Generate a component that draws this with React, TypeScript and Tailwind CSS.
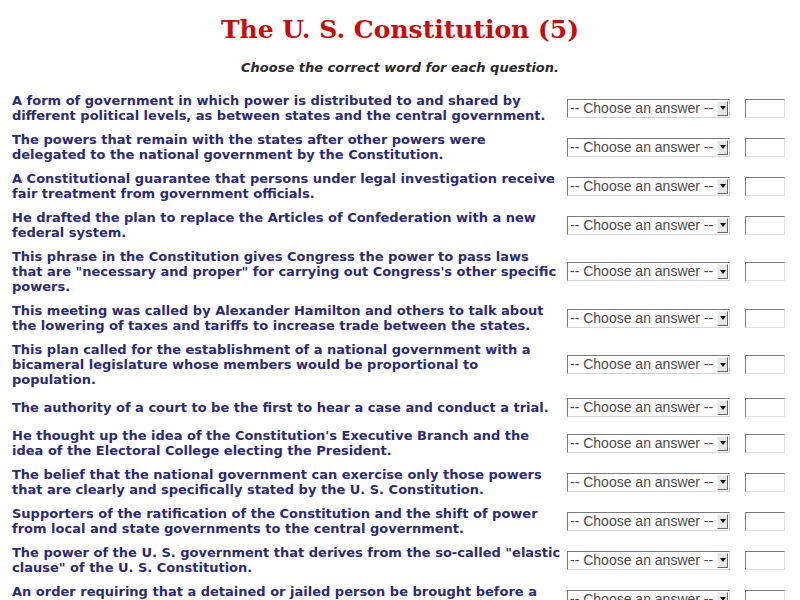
import React from "react";

const questions: string[] = [
  "A form of government in which power is distributed to and shared by\ndifferent political levels, as between states and the central government.",
  "The powers that remain with the states after other powers were\ndelegated to the national government by the Constitution.",
  "A Constitutional guarantee that persons under legal investigation receive\nfair treatment from government officials.",
  "He drafted the plan to replace the Articles of Confederation with a new\nfederal system.",
  "This phrase in the Constitution gives Congress the power to pass laws\nthat are \"necessary and proper\" for carrying out Congress's other specific\npowers.",
  "This meeting was called by Alexander Hamilton and others to talk about\nthe lowering of taxes and tariffs to increase trade between the states.",
  "This plan called for the establishment of a national government with a\nbicameral legislature whose members would be proportional to\npopulation.",
  "The authority of a court to be the first to hear a case and conduct a trial.",
  "He thought up the idea of the Constitution's Executive Branch and the\nidea of the Electoral College electing the President.",
  "The belief that the national government can exercise only those powers\nthat are clearly and specifically stated by the U. S. Constitution.",
  "Supporters of the ratification of the Constitution and the shift of power\nfrom local and state governments to the central government.",
  "The power of the U. S. government that derives from the so-called \"elastic\nclause\" of the U. S. Constitution.",
  "An order requiring that a detained or jailed person be brought before a\ncourt to decide whether the detention is lawful.",
];

function AnswerSelect() {
  return (
    <div className="flex h-[19px] w-[163px] items-stretch border border-t-[#7a7a7a] border-l-[#7a7a7a] border-b-[#d4d4d4] border-r-[#d4d4d4] bg-white">
      <span
        className="flex-1 pl-[2px] text-[14px] leading-[17px] text-[#4a4a4a] whitespace-nowrap overflow-hidden"
        style={{ fontFamily: '"Liberation Sans", Arial, sans-serif' }}
      >
        -- Choose an answer --
      </span>
      <span className="my-[1px] mr-[1px] flex w-[11px] items-center justify-center border border-t-[#f4f4f4] border-l-[#f4f4f4] border-b-[#666] border-r-[#666] bg-[#e6e6e6]">
        <svg width="6" height="4" viewBox="0 0 6 4">
          <path d="M0 0h6L3 4z" fill="#111" />
        </svg>
      </span>
    </div>
  );
}

export default function App() {
  return (
    <div className="h-screen overflow-hidden bg-white">
      <h1
        className="pt-[13px] text-center text-[25px] font-bold leading-[34px] text-[#cc0a0a]"
        style={{ fontFamily: '"DejaVu Serif", "Liberation Serif", serif' }}
      >
        The U. S. Constitution (5)
      </h1>
      <p
        className="mt-[13px] text-center text-[13px] font-bold italic leading-[15px] text-[#2a2a2a]"
        style={{ fontFamily: '"DejaVu Sans", sans-serif' }}
      >
        Choose the correct word for each question.
      </p>

      <div className="mt-[18px] flex flex-col gap-[9px] pl-[12px]">
        {questions.map((q) => (
          <div key={q} className="flex min-h-[23px] items-center">
            <p
              className="w-[555px] whitespace-pre-line text-[13px] font-bold leading-[15px] text-[#2b2b76]"
              style={{ fontFamily: '"DejaVu Sans", sans-serif' }}
            >
              {q}
            </p>
            <AnswerSelect />
            <span className="ml-[15px] h-[19px] w-[40px] border border-t-[#7a7a7a] border-l-[#7a7a7a] border-b-[#e0e0e0] border-r-[#e0e0e0] bg-white" />
          </div>
        ))}
      </div>
    </div>
  );
}
